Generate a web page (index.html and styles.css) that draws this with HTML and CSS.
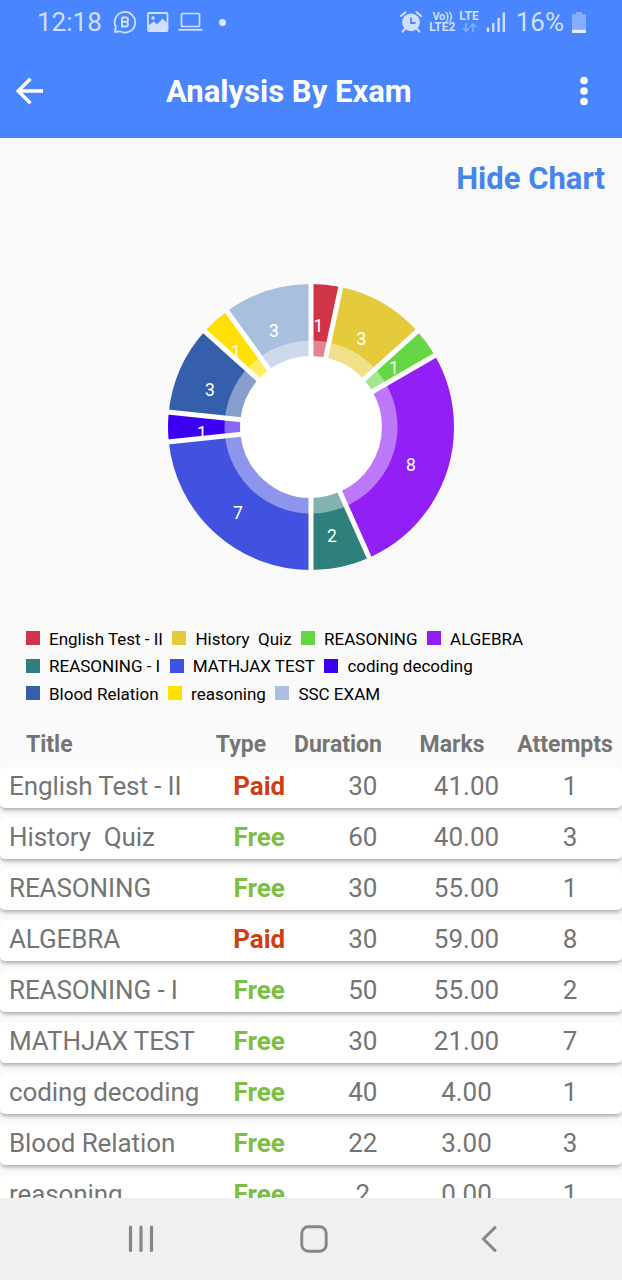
FILE: index.html
```html
<!DOCTYPE html>
<html lang="en">
  <head>
    <meta charset="UTF-8" />
    <meta name="viewport" content="width=device-width, initial-scale=1.0" />
    <title>Analysis By Exam</title>
    <link rel="stylesheet" href="styles.css">
  </head>
  <body>
    <header class="top">
      <div class="status-bar">
        <div class="status-left">
          <span class="clock">12:18</span>
          <svg class="icon-chat" width="24" height="24" viewBox="0 0 24 24">
            <path d="M2 22 L2.8 17 A10.3 10.3 0 1 1 7 21.3 Z" fill="none" stroke="currentColor" stroke-width="1.8" stroke-linejoin="round" />
            <path d="M9 7.5 V16.5 H13 A2.4 2.4 0 0 0 13 11.8 H9 M13 11.8 A2.1 2.1 0 0 0 12.7 7.5 H9" fill="none" stroke="currentColor" stroke-width="2" />
          </svg>
          <svg class="icon-image" width="22" height="20" viewBox="0 0 22 20">
            <rect x="1" y="1" width="19.5" height="18" rx="1" fill="none" stroke="currentColor" stroke-width="1.8" />
            <circle cx="6" cy="6" r="1.8" fill="currentColor" />
            <path d="M2 19 V13 L7 9.5 L10 12.5 L15.5 6.5 L20 11 V19 Z" fill="currentColor" />
          </svg>
          <svg class="icon-laptop" width="25" height="20" viewBox="0 0 25 20">
            <rect x="3.5" y="1.5" width="18" height="13" rx="1" fill="none" stroke="currentColor" stroke-width="1.7" />
            <path d="M0.5 17.8 H24.5" stroke="currentColor" stroke-width="1.8" />
          </svg>
          <span class="dot"></span>
        </div>
        <div class="status-right">
          <svg class="icon-alarm" width="22" height="22" viewBox="0 0 22 22">
            <path d="M1 5 L5.5 1.2 M21 5 L16.5 1.2 M5 18 L2.5 20.7 M17 18 L19.5 20.7" stroke="currentColor" stroke-width="2" stroke-linecap="round" />
            <circle cx="11" cy="11.3" r="8.9" fill="currentColor" />
            <path d="M11 6.5 V12 H15.5" fill="none" stroke="#4885ff" stroke-width="1.8" />
          </svg>
          <div class="net net-volte"><span class="vo">Vo))</span><span>LTE2</span></div>
          <div class="net net-lte">
            <span>LTE</span>
            <svg width="15" height="10" viewBox="0 0 15 10">
              <path d="M4 0 V8 M1 5 L4 8.3 L7 5 M11 9 V1 M8 4 L11 .8 L14 4" fill="none" stroke="currentColor" stroke-width="1.6" />
            </svg>
          </div>
          <svg class="icon-signal" width="20" height="20" viewBox="0 0 20 20">
            <path d="M2 15.5 V20 M7.3 11 V20 M12.6 6 V20 M17.8 .5 V20" stroke="currentColor" stroke-width="2.4" />
          </svg>
          <span class="percent">16%</span>
          <svg class="icon-battery" width="14" height="21" viewBox="0 0 14 21">
            <path d="M4 0 H10 V2 H13 Q14 2 14 3 V17 H0 V3 Q0 2 1 2 H4 Z" fill="#84adff" />
            <path d="M0 17.5 H14 V20 Q14 21 13 21 H1 Q0 21 0 20 Z" fill="#e4edff" />
          </svg>
        </div>
      </div>
      <div class="app-bar">
        <svg class="back" width="28" height="28" viewBox="0 0 28 28">
          <path d="M27 14 H3 M14.5 1.8 L2.2 14 L14.5 26.2" fill="none" stroke="#fff" stroke-width="3.4" />
        </svg>
        <h1>Analysis By Exam</h1>
        <svg class="more" width="8" height="30" viewBox="0 0 8 30">
          <circle cx="4" cy="4.5" r="3.8" fill="#fff" />
          <circle cx="4" cy="15" r="3.8" fill="#fff" />
          <circle cx="4" cy="25.5" r="3.8" fill="#fff" />
        </svg>
      </div>
    </header>

    <main>
      <a class="hide-chart">Hide Chart</a>

      <svg class="chart" width="290" height="290" viewBox="-145 -145 290 290">
        <circle r="71.5" fill="#fff" />
        <!-- one unit of path length is one attempt, 30 in total -->
        <g class="slices" transform="rotate(-90)">
          <circle r="107" pathLength="30" stroke="#d13349" stroke-dasharray="1 29" />
          <circle r="107" pathLength="30" stroke="#e5cb3b" stroke-dasharray="3 27" stroke-dashoffset="-1" />
          <circle r="107" pathLength="30" stroke="#65d745" stroke-dasharray="1 29" stroke-dashoffset="-4" />
          <circle r="107" pathLength="30" stroke="#921ff6" stroke-dasharray="8 22" stroke-dashoffset="-5" />
          <circle r="107" pathLength="30" stroke="#2f7f7d" stroke-dasharray="2 28" stroke-dashoffset="-13" />
          <circle r="107" pathLength="30" stroke="#4151e0" stroke-dasharray="7 23" stroke-dashoffset="-15" />
          <circle r="107" pathLength="30" stroke="#3b00f3" stroke-dasharray="1 29" stroke-dashoffset="-22" />
          <circle r="107" pathLength="30" stroke="#365fab" stroke-dasharray="3 27" stroke-dashoffset="-23" />
          <circle r="107" pathLength="30" stroke="#ffe000" stroke-dasharray="1 29" stroke-dashoffset="-26" />
          <circle r="107" pathLength="30" stroke="#a8c0de" stroke-dasharray="3 27" stroke-dashoffset="-27" />
        </g>
        <circle class="inner-ring" r="78.5" />
        <g class="gaps">
          <path d="M0 -70 V-144" />
          <path d="M0 -70 V-144" transform="rotate(12)" />
          <path d="M0 -70 V-144" transform="rotate(48)" />
          <path d="M0 -70 V-144" transform="rotate(60)" />
          <path d="M0 -70 V-144" transform="rotate(156)" />
          <path d="M0 -70 V-144" transform="rotate(180)" />
          <path d="M0 -70 V-144" transform="rotate(264)" />
          <path d="M0 -70 V-144" transform="rotate(276)" />
          <path d="M0 -70 V-144" transform="rotate(312)" />
          <path d="M0 -70 V-144" transform="rotate(324)" />
        </g>
        <g class="values">
          <text x="7.5" y="-95">1</text>
          <text x="50.5" y="-82">3</text>
          <text x="83" y="-53">1</text>
          <text x="100" y="43.5">8</text>
          <text x="21" y="115">2</text>
          <text x="-73" y="92">7</text>
          <text x="-109" y="12">1</text>
          <text x="-101" y="-31">3</text>
          <text x="-75" y="-69">1</text>
          <text x="-37" y="-90">3</text>
        </g>
      </svg>

      <div class="legend">
        <div class="legend-row">
          <span class="key red">English Test - II</span>
          <span class="key gold">History&nbsp; Quiz</span>
          <span class="key green">REASONING</span>
          <span class="key purple">ALGEBRA</span>
        </div>
        <div class="legend-row">
          <span class="key teal">REASONING - I</span>
          <span class="key blue">MATHJAX TEST</span>
          <span class="key violet">coding decoding</span>
        </div>
        <div class="legend-row">
          <span class="key navy">Blood Relation</span>
          <span class="key yellow">reasoning</span>
          <span class="key sky">SSC EXAM</span>
        </div>
      </div>

      <div class="table-head">
        <span>Title</span>
        <span>Type</span>
        <span>Duration</span>
        <span>Marks</span>
        <span>Attempts</span>
      </div>

      <div class="exam-list">
        <div class="exam"><span>English Test - II</span><b class="paid">Paid</b><span>30</span><span>41.00</span><span>1</span></div>
        <div class="exam"><span>History&nbsp; Quiz</span><b class="free">Free</b><span>60</span><span>40.00</span><span>3</span></div>
        <div class="exam"><span>REASONING</span><b class="free">Free</b><span>30</span><span>55.00</span><span>1</span></div>
        <div class="exam"><span>ALGEBRA</span><b class="paid">Paid</b><span>30</span><span>59.00</span><span>8</span></div>
        <div class="exam"><span>REASONING - I</span><b class="free">Free</b><span>50</span><span>55.00</span><span>2</span></div>
        <div class="exam"><span>MATHJAX TEST</span><b class="free">Free</b><span>30</span><span>21.00</span><span>7</span></div>
        <div class="exam"><span>coding decoding</span><b class="free">Free</b><span>40</span><span>4.00</span><span>1</span></div>
        <div class="exam"><span>Blood Relation</span><b class="free">Free</b><span>22</span><span>3.00</span><span>3</span></div>
        <div class="exam"><span>reasoning</span><b class="free">Free</b><span>2</span><span>0.00</span><span>1</span></div>
      </div>
    </main>

    <nav class="nav-bar">
      <svg width="26" height="28" viewBox="0 0 26 28">
        <path d="M2.5 2 V25.5 M13 2 V25.5 M23.5 2 V25.5" stroke="#868686" stroke-width="3.2" stroke-linecap="round" />
      </svg>
      <svg class="home" width="28" height="28" viewBox="0 0 28 28">
        <rect x="1.8" y="1.8" width="24.4" height="24.4" rx="6.5" fill="none" stroke="#868686" stroke-width="2.9" />
      </svg>
      <svg width="16" height="28" viewBox="0 0 16 28">
        <path d="M14 2.5 L2.5 14 L14 25.5" fill="none" stroke="#868686" stroke-width="3" stroke-linecap="round" />
      </svg>
    </nav>
  </body>
</html>
```

FILE: styles.css
```css
* {
  box-sizing: border-box;
}

body {
  font-family: Roboto, sans-serif;
  margin: 0;
  height: 1280px;
  display: flex;
  flex-direction: column;
  overflow: hidden;
  background-color: #fafafa;
}

svg {
  display: block;
  flex: none;
}

.top {
  height: 138px;
  flex: none;
  background-color: #4885ff;
  color: #cfdfff;
}

.status-bar {
  height: 44px;
  padding: 0 36px 0 37px;
  display: flex;
  justify-content: space-between;
}

.status-left,
.status-right {
  display: flex;
  align-items: center;
}

.clock,
.percent {
  font-size: 26px;
  line-height: 44px;
}

.icon-chat {
  margin-left: 11px;
}

.icon-image {
  margin-left: 10px;
}

.icon-laptop {
  margin-left: 9px;
}

.dot {
  width: 7px;
  height: 7px;
  margin-left: 16px;
  border-radius: 50%;
  background-color: #dbe7ff;
}

.net {
  display: flex;
  flex-direction: column;
  align-items: center;
  font-size: 12px;
  font-weight: bold;
  line-height: 11px;
}

.net-volte {
  margin-left: 7px;
}

.vo {
  font-size: 11px;
  letter-spacing: -0.3px;
}

.net-lte {
  margin-left: 4px;
}

.net-lte svg {
  margin-top: 1px;
  color: #84adff;
}

.icon-signal {
  margin-left: 7px;
}

.percent {
  margin-left: 10px;
}

.icon-battery {
  margin-left: 8px;
}

.app-bar {
  height: 94px;
  padding: 0 34px 0 16px;
  display: flex;
  align-items: center;
}

.app-bar h1 {
  flex: 1;
  margin: 2px 0 0 122px;
  color: #fff;
  font-size: 31px;
  font-weight: bold;
  line-height: 40px;
}

.back,
.more {
  margin-bottom: 1px;
}

main {
  flex: 1;
  min-height: 0;
  overflow: hidden;
  display: flex;
  flex-direction: column;
}

.hide-chart {
  margin: 21px 17px 0 0;
  align-self: flex-end;
  color: #4684ee;
  font-size: 31px;
  font-weight: bold;
  line-height: 40px;
}

.chart {
  margin: 83px auto 0;
}

.slices circle {
  fill: none;
  stroke-width: 72px;
}

.inner-ring {
  fill: none;
  stroke: #fff;
  stroke-opacity: 0.4;
  stroke-width: 16px;
}

.gaps path {
  stroke: #fdfdfd;
  stroke-width: 5px;
}

.values text {
  fill: #fff;
  font-size: 17.5px;
  text-anchor: middle;
}

.legend {
  margin: 53px 0 0 26px;
  color: #000;
  font-size: 17px;
}

.legend-row {
  height: 27.5px;
  display: flex;
  gap: 9.5px;
  align-items: center;
}

.key {
  display: flex;
  align-items: center;
  gap: 9px;
  white-space: nowrap;
}

.key::before {
  content: "";
  width: 14px;
  height: 14px;
  margin-top: -1px;
}

.red::before { background-color: #d13349; }
.gold::before { background-color: #e5cb3b; }
.green::before { background-color: #65d745; }
.purple::before { background-color: #921ff6; }
.teal::before { background-color: #2f7f7d; }
.blue::before { background-color: #4151e0; }
.violet::before { background-color: #3b00f3; }
.navy::before { background-color: #365fab; }
.yellow::before { background-color: #ffe000; }
.sky::before { background-color: #a8c0de; }

.table-head {
  display: grid;
  grid-template-columns: 200px 82px 112px 116px 110px;
  margin-top: 22.5px;
  color: #757575;
  font-size: 23px;
  font-weight: bold;
  line-height: 30px;
  text-align: center;
}

.table-head span:first-child {
  padding-left: 26px;
  text-align: left;
}

.exam-list {
  display: flex;
  flex-direction: column;
  gap: 10px;
  margin-top: 7px;
}

.exam {
  height: 41px;
  flex: none;
  display: grid;
  grid-template-columns: 2fr 1fr 1fr 1fr 1fr;
  border-radius: 5px;
  background-color: #fff;
  box-shadow: 0 3px 4px -1px rgba(0, 0, 0, 0.34);
  color: #757575;
  font-size: 26px;
  line-height: 38px;
  text-align: center;
}

.exam span:first-child {
  padding-left: 9px;
  letter-spacing: -0.1px;
  text-align: left;
  white-space: nowrap;
}

.paid {
  color: #d13d12;
}

.free {
  color: #7cbf42;
}

.nav-bar {
  height: 82px;
  flex: none;
  padding: 0 125px 0 128px;
  display: flex;
  align-items: center;
  justify-content: space-between;
  background-color: #f0f0f0;
}

.home {
  margin-right: 7px;
}
```
